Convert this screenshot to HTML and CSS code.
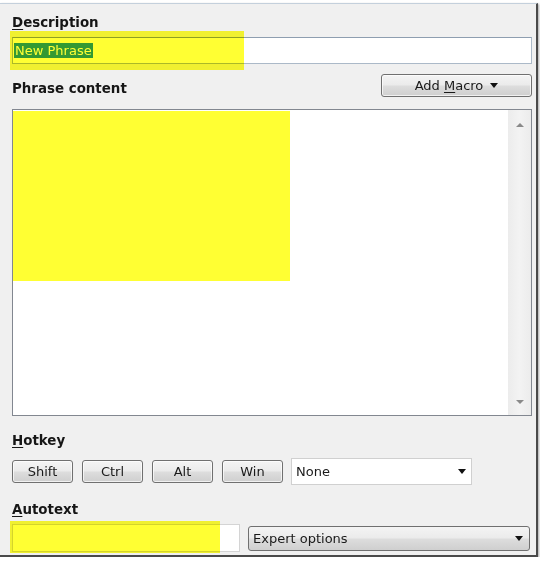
FILE: index.html
```html
<!DOCTYPE html>
<html lang="en">
<head>
  <meta charset="UTF-8" />
  <title>Phrase editor</title>
  <link rel="stylesheet" href="styles.css">
</head>
<body>
  <div class="window">

    <!-- Description -->
    <div class="label"><u>D</u>escription</div>
    <div class="field desc-field"><span class="selected">New Phrase</span></div>

    <!-- Phrase content -->
    <div class="content-head">
      <div class="label">Phrase content</div>
      <button class="btn macro-btn"><span>Add <u>M</u>acro</span><span class="arrow"></span></button>
    </div>
    <div class="editor">
      <div class="editor-text"></div>
      <div class="scrollbar">
        <span class="scroll-btn scroll-up"><span class="tri-up"></span></span>
        <span class="scroll-btn scroll-down"><span class="tri-down"></span></span>
      </div>
    </div>

    <!-- Hotkey -->
    <div class="label hotkey-label"><u>H</u>otkey</div>
    <div class="hotkey-row">
      <button class="btn key">Shift</button>
      <button class="btn key">Ctrl</button>
      <button class="btn key">Alt</button>
      <button class="btn key">Win</button>
      <div class="combo">None<span class="arrow"></span></div>
    </div>

    <!-- Autotext -->
    <div class="label autotext-label"><u>A</u>utotext</div>
    <div class="autotext-row">
      <div class="field auto-field"></div>
      <div class="dropdown">Expert options<span class="arrow"></span></div>
    </div>

    <!-- Surligneur jaune -->
    <div class="marker marker-desc"></div>
    <div class="marker marker-editor"></div>
    <div class="marker marker-auto"></div>
  </div>
</body>
</html>
```

FILE: styles.css
```css
/* Base */
html, body {
  margin: 0;
  padding: 0;
  background: #ffffff;
}

body {
  font-family: "DejaVu Sans", Verdana, sans-serif;
  font-size: 13px;
  color: #1a1a1a;
}

/* Fenêtre */
.window {
  position: relative;
  box-sizing: border-box;
  width: 538px;
  margin-top: 3px;
  padding: 10px 4px 3px 12px;
  background: #f0f0f0;
  border-top: 1px solid #c4d0dc;
  border-right: 2px solid #4a4a4a;
  border-bottom: 2px solid #4a4a4a;
  box-shadow: 1px 1px 2px rgba(0,0,0,0.35);
}

.label {
  font-weight: bold;
  font-size: 13.4px;
  line-height: 17px;
  color: #161616;
}
.label u {
  text-underline-offset: 2px;
}

/* Champs texte */
.field {
  box-sizing: border-box;
  background: #ffffff;
  border: 1px solid #abb9c8;
  border-top-color: #8e9eb0;
}

.desc-field {
  display: flex;
  align-items: center;
  height: 27px;
  margin-top: 6px;
  padding-left: 1px;
}

.selected {
  line-height: 15px;
  padding: 0 1px;
  background: #3399ff;
  color: #ffffff;
}

/* Ligne Phrase content */
.content-head {
  display: flex;
  justify-content: space-between;
  align-items: flex-end;
  margin-top: 10px;
}

.btn {
  box-sizing: border-box;
  height: 23px;
  padding: 0;
  font-family: inherit;
  font-size: 13px;
  color: #1a1a1a;
  border: 1px solid #707070;
  border-radius: 3px;
  background: linear-gradient(180deg, #f4f4f4 0%, #ebebeb 48%, #dddddd 52%, #cfcfcf 100%);
  box-shadow: inset 0 0 0 1px rgba(255,255,255,0.7);
}

.macro-btn {
  display: flex;
  align-items: center;
  justify-content: center;
  gap: 7px;
  width: 151px;
}
.macro-btn u {
  text-underline-offset: 2px;
}

.arrow {
  display: inline-block;
  width: 0;
  height: 0;
  border-left: 4px solid transparent;
  border-right: 4px solid transparent;
  border-top: 5px solid #111111;
}

/* Zone de contenu */
.editor {
  display: flex;
  height: 307px;
  margin-top: 12px;
  box-sizing: border-box;
  border: 1px solid #828790;
  background: #ffffff;
}
.editor-text {
  flex: 1;
}
.scrollbar {
  width: 23px;
  display: flex;
  flex-direction: column;
  justify-content: space-between;
  background: linear-gradient(90deg, #ececec 0%, #f3f3f3 50%, #ececec 100%);
}
.scroll-btn {
  display: flex;
  align-items: center;
  justify-content: center;
}
.scroll-up { height: 30px; }
.scroll-down { height: 26px; }
.tri-up, .tri-down {
  width: 0;
  height: 0;
  border-left: 4px solid transparent;
  border-right: 4px solid transparent;
}
.tri-up { border-bottom: 4px solid #8a8a8a; }
.tri-down { border-top: 4px solid #8a8a8a; }

/* Hotkey */
.hotkey-label {
  margin-top: 16px;
}
.hotkey-row {
  display: flex;
  align-items: center;
  gap: 9px;
  height: 27px;
  margin-top: 9px;
}
.key {
  width: 61px;
}
.combo {
  box-sizing: border-box;
  display: flex;
  align-items: center;
  justify-content: space-between;
  width: 181px;
  height: 27px;
  margin-left: -1px;
  padding: 0 5px 0 4px;
  background: #ffffff;
  border: 1px solid #d0d0d0;
}

/* Autotext */
.autotext-label {
  margin-top: 16px;
}
.autotext-row {
  display: flex;
  align-items: center;
  gap: 8px;
  height: 28px;
  margin-top: 6px;
}
.auto-field {
  width: 228px;
  height: 28px;
  border-color: #d4d4d4;
}
.dropdown {
  box-sizing: border-box;
  display: flex;
  align-items: center;
  justify-content: space-between;
  flex: 1;
  height: 25px;
  margin-right: 2px;
  padding: 0 6px 0 4px;
  border: 1px solid #707070;
  border-radius: 3px;
  background: linear-gradient(180deg, #f4f4f4 0%, #ebebeb 48%, #dddddd 52%, #cfcfcf 100%);
}

/* Surligneur */
.marker {
  position: absolute;
  background: #ffff33;
  mix-blend-mode: multiply;
}
.marker-desc {
  left: 10px;
  top: 27px;
  width: 234px;
  height: 39px;
  filter: blur(0.6px);
}
.marker-editor {
  left: 13px;
  top: 107px;
  width: 277px;
  height: 170px;
}
.marker-auto {
  left: 10px;
  top: 517px;
  width: 210px;
  height: 32px;
  filter: blur(0.6px);
}
```
